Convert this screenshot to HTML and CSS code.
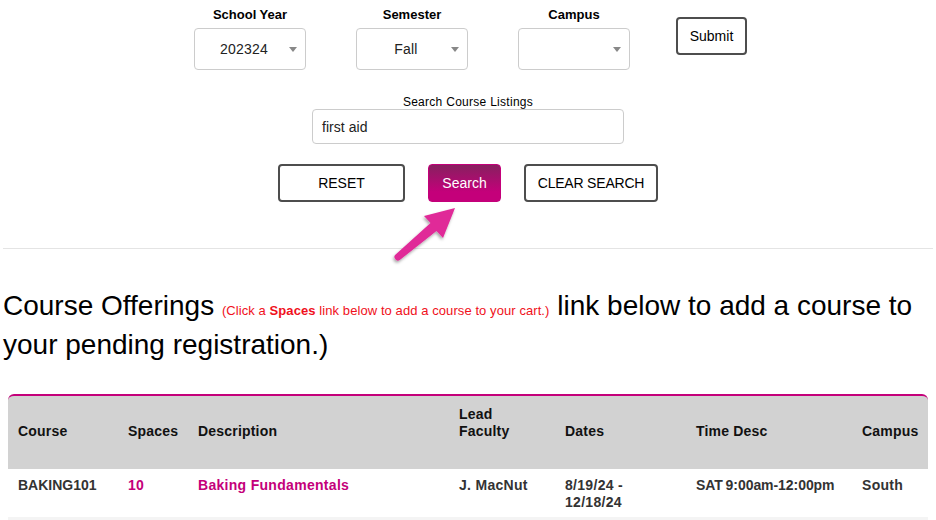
FILE: index.html
```html
<!DOCTYPE html>
<html lang="en">
<head>
<meta charset="utf-8">
<title>Course Offerings</title>
<link rel="stylesheet" href="styles.css">
</head>
<body>
<form class="filters">
  <div class="term-row">
    <div class="field">
      <label class="field-label">School Year</label>
      <div class="select"><span class="select-value">202324</span><span class="caret"></span></div>
    </div>
    <div class="field">
      <label class="field-label">Semester</label>
      <div class="select"><span class="select-value">Fall</span><span class="caret"></span></div>
    </div>
    <div class="field">
      <label class="field-label">Campus</label>
      <div class="select"><span class="select-value"></span><span class="caret"></span></div>
    </div>
    <button type="button" class="btn btn-submit">Submit</button>
  </div>
  <div class="search-block">
    <label class="search-label">Search Course Listings</label>
    <div class="search-input">first aid</div>
  </div>
  <div class="button-row">
    <button type="button" class="btn btn-reset">RESET</button>
    <button type="button" class="btn btn-search">Search</button>
    <button type="button" class="btn btn-clear">CLEAR SEARCH</button>
  </div>
  <svg class="arrow" width="80" height="70" viewBox="0 0 80 70">
    <defs>
      <filter id="arrow-shadow" x="-20%" y="-20%" width="150%" height="150%">
        <feDropShadow dx="-1" dy="2" stdDeviation="1.5" flood-color="#000" flood-opacity="0.35"/>
      </filter>
    </defs>
    <path filter="url(#arrow-shadow)" fill="#e02b98" d="M5.9 48.2 L40.5 17 L34 10 L65 2 L53 32 L46.5 25 L10.1 53.8 A3.5 3.5 0 0 1 5.9 48.2 Z"/>
  </svg>
</form>
<hr class="divider">
<h2 class="heading">Course Offerings <small class="hint">(Click a <b>Spaces</b> link below to add a course to your cart.)</small> link below to add a course to your pending registration.)</h2>
<table class="courses">
  <thead>
    <tr>
      <th class="c-course">Course</th>
      <th class="c-spaces">Spaces</th>
      <th class="c-desc">Description</th>
      <th class="c-lead">Lead Faculty<br>&nbsp;</th>
      <th class="c-dates">Dates</th>
      <th class="c-time">Time Desc</th>
      <th class="c-campus">Campus</th>
    </tr>
  </thead>
  <tbody>
    <tr>
      <td class="code">BAKING101</td>
      <td><a class="link" href="#">10</a></td>
      <td><a class="link" href="#">Baking Fundamentals</a></td>
      <td>J. MacNut</td>
      <td>8/19/24 - 12/18/24</td>
      <td class="time">SAT 9:00am-12:00pm</td>
      <td>South</td>
    </tr>
  </tbody>
</table>
</body>
</html>
```
FILE: styles.css
```css
* { box-sizing: border-box; }
html, body { margin: 0; padding: 0; }
body {
  font-family: "Liberation Sans", Arial, sans-serif;
  color: #000;
  background: #fff;
  height: 520px;
  overflow: hidden;
}
.filters {
  position: relative;
  height: 248px;
  padding-top: 7px;
}
.term-row {
  display: flex;
  justify-content: flex-start;
  padding-left: 194px;
  height: 63px;
}
.field {
  width: 112px;
  margin-right: 50px;
  text-align: center;
}
.field:nth-child(3) { margin-right: 46px; }
.field-label {
  display: block;
  height: 21px;
  font-size: 13px;
  line-height: 16px;
  font-weight: 700;
}
.select {
  position: relative;
  display: flex;
  align-items: center;
  width: 112px;
  height: 42px;
  border: 1px solid #ccc;
  border-radius: 4px;
  background: #fff;
  padding-left: 24px;
}
.select-value {
  font-size: 14px;
  letter-spacing: 0.2px;
  color: #222;
  width: 50px;
  text-align: center;
}
.caret {
  position: absolute;
  right: 8px;
  top: 18px;
  width: 0;
  height: 0;
  border-left: 4.5px solid transparent;
  border-right: 4.5px solid transparent;
  border-top: 5px solid #888;
}
.btn {
  font-family: inherit;
  font-size: 14px;
  height: 38px;
  padding: 0;
  border: 2px solid #4d4d4d;
  border-radius: 4px;
  background: #fff;
  color: #000;
}
.btn-submit {
  width: 71px;
  margin-top: 10px;
}
.search-block {
  margin-top: 24px;
  text-align: center;
}
.search-label {
  display: block;
  height: 15px;
  padding-top: 1px;
  font-size: 12px;
  line-height: 15px;
  letter-spacing: 0.28px;
}
.search-input {
  width: 312px;
  height: 35px;
  margin: 0 auto 0 312px;
  padding-left: 9px;
  border: 1px solid #ccc;
  border-radius: 4px;
  font-size: 14px;
  line-height: 34px;
  letter-spacing: 0.05px;
  text-align: left;
  color: #222;
}
.button-row {
  display: flex;
  gap: 23px;
  margin-top: 20px;
  padding-left: 278px;
}
.btn-reset { width: 127px; }
.btn-clear { width: 134px; letter-spacing: -0.2px; }
.btn-search {
  width: 73px;
  border: 1px solid #c4007a;
  background: linear-gradient(#87205f, #c4007a 75%);
  color: #fff;
}
.arrow {
  position: absolute;
  left: 390px;
  top: 206px;
}
.divider {
  margin: 0 3px;
  border: 0;
  border-top: 1px solid #e4e4e4;
  height: 1px;
}
.heading {
  margin: 37px 0 0;
  padding: 0 3px;
  font-size: 28px;
  line-height: 39px;
  font-weight: 400;
}
.hint {
  font-size: 13px;
  line-height: 1;
  color: #f01020;
  letter-spacing: 0.08px;
}
.courses {
  margin: 30px 0 0 8px;
  width: 920px;
  table-layout: fixed;
  border-collapse: separate;
  border-spacing: 0;
  font-size: 14px;
  line-height: 17px;
  letter-spacing: 0.3px;
  font-weight: 700;
}
.courses th {
  height: 75px;
  padding: 0 10px 2px;
  text-align: left;
  vertical-align: middle;
  background: #d2d2d2;
  border-top: 2px solid #c4007a;
  color: #111;
  letter-spacing: 0.2px;
}
.courses th:first-child { border-top-left-radius: 6px; }
.courses th:last-child { border-top-right-radius: 6px; }
.c-course { width: 110px; }
.c-spaces { width: 70px; }
.c-desc { width: 261px; }
.c-lead { width: 106px; }
.c-dates { width: 131px; }
.c-time { width: 166px; }
.c-campus { width: 76px; }
.courses td {
  height: 51px;
  padding: 8px 10px 0;
  vertical-align: top;
  color: #333;
  border-bottom: 3px solid #f4f4f4;
}
.courses .code { letter-spacing: 0; }
.courses .time { letter-spacing: -0.06px; word-spacing: -1px; }
.link {
  color: #c4007a;
  text-decoration: none;
}
```
